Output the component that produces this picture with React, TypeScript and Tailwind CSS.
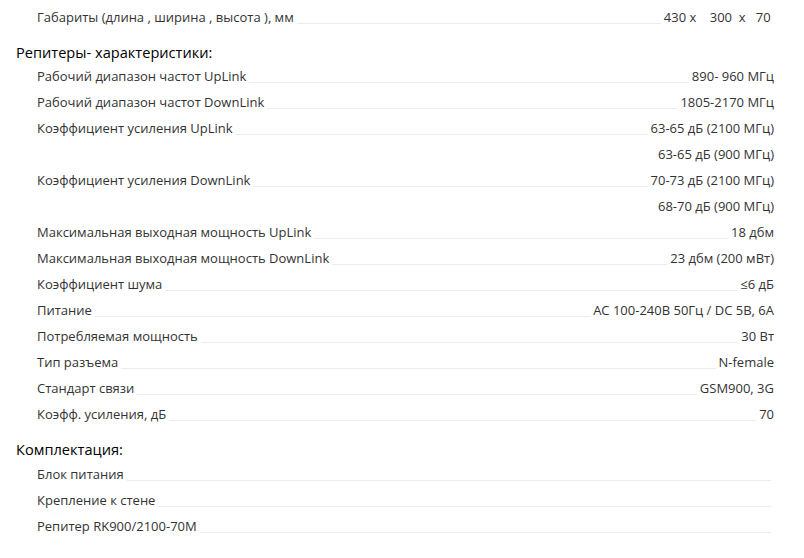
const specs: [string, string][] = [
  ["Рабочий диапазон частот UpLink", "890- 960 МГц"],
  ["Рабочий диапазон частот DownLink", "1805-2170 МГц"],
  ["Коэффициент усиления UpLink", "63-65 дБ (2100 МГц)"],
  ["", "63-65 дБ (900 МГц)"],
  ["Коэффициент усиления DownLink", "70-73 дБ (2100 МГц)"],
  ["", "68-70 дБ (900 МГц)"],
  ["Максимальная выходная мощность UpLink", "18 дбм"],
  ["Максимальная выходная мощность DownLink", "23 дбм (200 мВт)"],
  ["Коэффициент шума", "≤6 дБ"],
  ["Питание", "AC 100-240В 50Гц / DC 5В, 6А"],
  ["Потребляемая мощность", "30 Вт"],
  ["Тип разъема", "N-female"],
  ["Стандарт связи", "GSM900, 3G"],
  ["Коэфф. усиления, дБ", "70"],
]

const kit = ["Блок питания", "Крепление к стене", "Репитер RK900/2100-70M"]

const Row = ({ label, value }: { label: string; value: string }) => (
  <div className="h-[26px] flex items-end pl-[37px] leading-[18px]">
    {label ? (
      <>
        <span className="whitespace-nowrap">{label}</span>
        <div className="flex-1 h-px bg-[#ececec] mb-[2px] mx-[3px]" />
      </>
    ) : (
      <div className="flex-1" />
    )}
    <span className="whitespace-pre">{value}</span>
  </div>
)

export default function App() {
  return (
    <div
      className="w-[804px] h-[558px] bg-white text-[13px] text-[#333] pr-[30px] overflow-hidden"
      style={{ fontFamily: '"Open Sans", sans-serif' }}
    >
      <Row label="Габариты (длина , ширина , высота ), мм" value={"430 x    300  x   70 "} />
      <div className="h-[33px] flex items-end pl-[16px] text-[14.6px] leading-[14px] text-black">
        Репитеры- характеристики:
      </div>
      {specs.map(([l, v], i) => (
        <Row key={i} label={l} value={v} />
      ))}
      <div className="h-[34px] flex items-end pl-[16px] text-[14.6px] leading-[16px] text-black">
        Комплектация:
      </div>
      {kit.map((k) => (
        <Row key={k} label={k} value="" />
      ))}
    </div>
  )
}
